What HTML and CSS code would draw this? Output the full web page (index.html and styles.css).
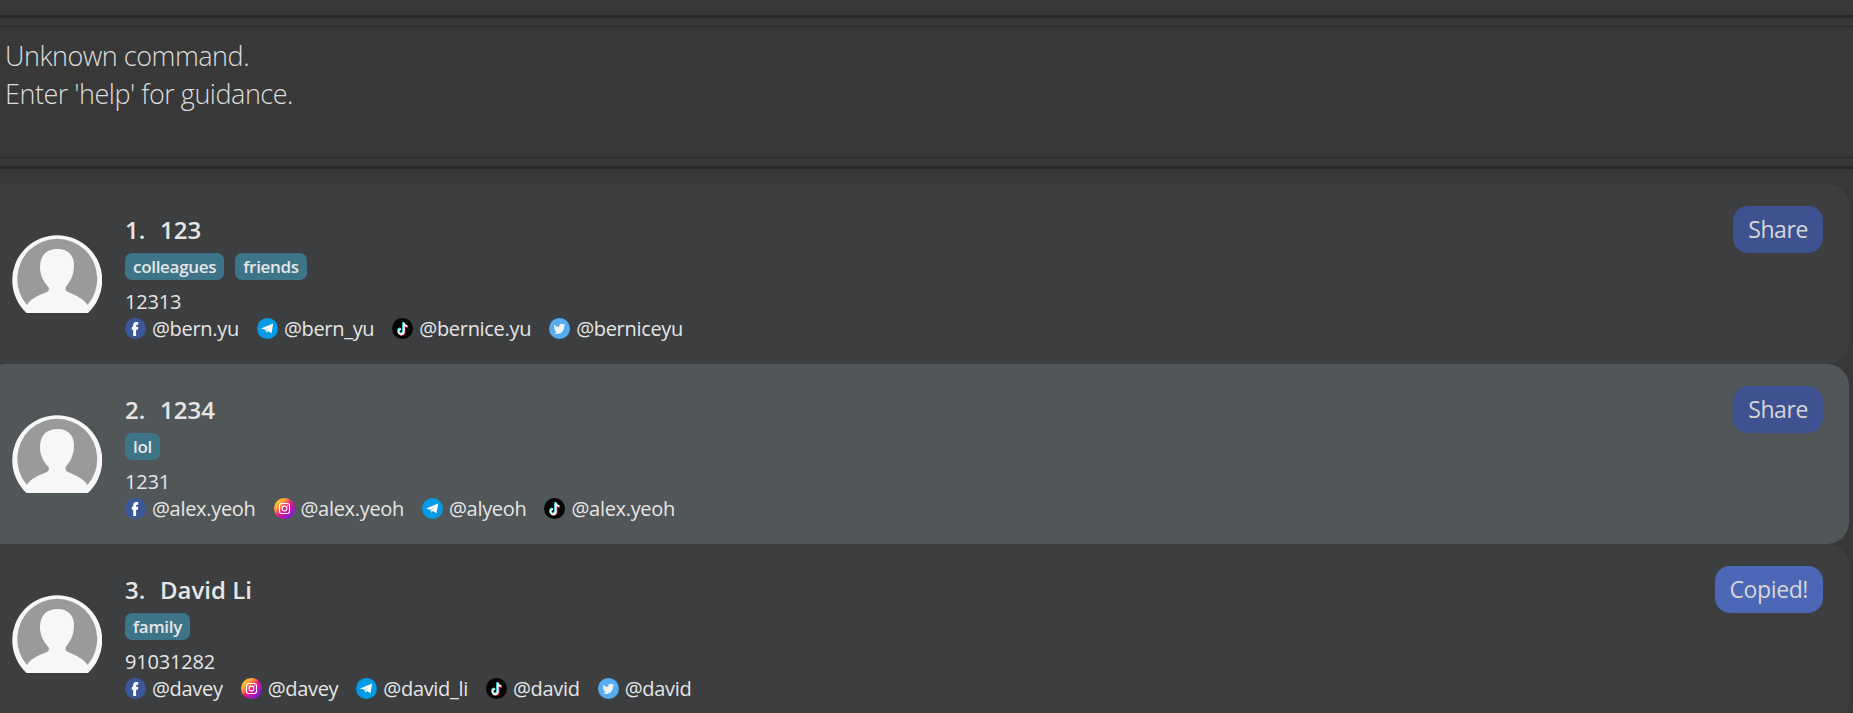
FILE: index.html
```
<!DOCTYPE html>
<html lang="en">
<head>
<meta charset="utf-8">
<title>Contacts</title>
<link rel="stylesheet" href="styles.css">
</head>
<body>
<svg class="defs" aria-hidden="true">
  <defs>
    <linearGradient id="ig" x1="0.1" y1="0.1" x2="0.9" y2="0.9">
      <stop offset="0" stop-color="#ffd91f"/>
      <stop offset="0.28" stop-color="#ff9440"/>
      <stop offset="0.5" stop-color="#f01883"/>
      <stop offset="0.78" stop-color="#a516c0"/>
      <stop offset="1" stop-color="#6a1fe0"/>
    </linearGradient>
    <symbol id="avatar" viewBox="0 0 90 78">
      <path d="M14.500 78A45 45 0 1 1 76 78Z" fill="#f7f7f7"/>
      <path d="M15 70A40 40 0 1 1 75.500 70C73 65 64 60 55 56.500C53 55 53.500 53 54 51.500C59 46 62 39 62 30C62 20 55.500 14 45.500 14C35 14 28 20 28 32C28 40 31 46 36.500 52C37.500 54 37 55.500 35 57C27 60 18 64 15 70Z" fill="#9a9a9a"/>
    </symbol>
    <symbol id="facebook" viewBox="0 0 21 21">
      <circle cx="10.500" cy="10.500" r="10.500" fill="#3b5998"/>
      <path d="M8.200 18V11.700H6.800V8.700H8.200V7C8.200 4.900 9.400 4 11.100 4H13.200V6.700H12C11.300 6.700 11.100 7 11.100 7.600V8.700H13.200L12.900 11.700H11.100V18Z" fill="#fff"/>
    </symbol>
    <symbol id="telegram" viewBox="0 0 21 21">
      <circle cx="10.500" cy="10.500" r="10.500" fill="#039be5"/>
      <path d="M4 10.600L16.200 5.600L14.500 15.200L11 13L9.300 14.800L8.500 11.800Z" fill="#fff"/>
      <path d="M8.700 11.600L13.500 8.200L9.700 12.300L9.400 14.200Z" fill="#8fd0f2"/>
    </symbol>
    <symbol id="tiktok" viewBox="0 0 21 21">
      <circle cx="10.500" cy="10.500" r="10.500" fill="#050505"/>
      <g fill="none" stroke-width="1.700">
        <path d="M11 4.200V13.200A2.500 2.500 0 1 1 8.200 10.300M11 4.500C11.300 6.500 12.400 7.500 14.400 7.600" stroke="#25f4ee"/>
        <path d="M12.600 5V14.200A2.700 2.700 0 0 1 7.700 15.800M12.600 5.300C12.900 7.500 13.900 8.700 16.100 8.800" stroke="#fe2c55"/>
        <path d="M11.800 4.600V13.700A2.600 2.600 0 1 1 9.200 11.200M11.800 5C12.100 7.100 13.300 8 15.300 8.200" stroke="#fff"/>
      </g>
    </symbol>
    <symbol id="twitter" viewBox="0 0 21 21">
      <circle cx="10.500" cy="10.500" r="10.500" fill="#55acee"/>
      <path d="M16.400 7.200L15 8.500C15.100 12.800 12.100 15.900 8.300 15.900C6.900 15.900 5.700 15.500 4.800 14.900C6 15 7.200 14.600 8 13.900C6.900 13.800 6.100 13.100 5.800 12.200H6.800C5.700 11.800 5 10.900 5 9.800L6 10C5 9.200 4.700 7.900 5.300 6.800C6.600 8.200 8.200 9 10.200 9.100C9.800 7.300 11.100 5.700 12.800 5.700C13.500 5.700 14.100 6 14.600 6.500L16.100 5.900L15.200 7.300Z" fill="#f1f2f2"/>
    </symbol>
    <symbol id="instagram" viewBox="0 0 21 21">
      <circle cx="10.500" cy="10.500" r="10.500" fill="url(#ig)"/>
      <g fill="none" stroke="#fff" stroke-width="1.100">
        <rect x="5.500" y="5.500" width="10" height="10" rx="2.200"/>
        <circle cx="10.500" cy="10.500" r="2.400"/>
      </g>
      <circle cx="13.400" cy="7.600" r="0.600" fill="#fff"/>
    </symbol>
  </defs>
</svg>
<section class="result">
  <div class="result-text">Unknown command.<br>Enter 'help' for guidance.</div>
</section>
<main class="list">
  <article class="card">
    <svg class="avatar"><use href="#avatar"/></svg>
    <div class="info">
      <h2 class="name"><span class="index">1.</span>123</h2>
      <div class="tags"><span class="tag">colleagues</span><span class="tag">friends</span></div>
      <div class="phone">12313</div>
      <div class="socials">
        <span class="social"><svg><use href="#facebook"/></svg>@bern.yu</span>
        <span class="social"><svg><use href="#telegram"/></svg>@bern_yu</span>
        <span class="social"><svg><use href="#tiktok"/></svg>@bernice.yu</span>
        <span class="social"><svg><use href="#twitter"/></svg>@berniceyu</span>
      </div>
    </div>
    <button class="share">Share</button>
  </article>
  <article class="card selected">
    <svg class="avatar"><use href="#avatar"/></svg>
    <div class="info">
      <h2 class="name"><span class="index">2.</span>1234</h2>
      <div class="tags"><span class="tag">lol</span></div>
      <div class="phone">1231</div>
      <div class="socials">
        <span class="social"><svg><use href="#facebook"/></svg>@alex.yeoh</span>
        <span class="social"><svg><use href="#instagram"/></svg>@alex.yeoh</span>
        <span class="social"><svg><use href="#telegram"/></svg>@alyeoh</span>
        <span class="social"><svg><use href="#tiktok"/></svg>@alex.yeoh</span>
      </div>
    </div>
    <button class="share">Share</button>
  </article>
  <article class="card">
    <svg class="avatar"><use href="#avatar"/></svg>
    <div class="info">
      <h2 class="name"><span class="index">3.</span>David Li</h2>
      <div class="tags"><span class="tag">family</span></div>
      <div class="phone">91031282</div>
      <div class="socials">
        <span class="social"><svg><use href="#facebook"/></svg>@davey</span>
        <span class="social"><svg><use href="#instagram"/></svg>@davey</span>
        <span class="social"><svg><use href="#telegram"/></svg>@david_li</span>
        <span class="social"><svg><use href="#tiktok"/></svg>@david</span>
        <span class="social"><svg><use href="#twitter"/></svg>@david</span>
      </div>
    </div>
    <button class="share copied">Copied!</button>
  </article>
</main>
</body>
</html>
```
FILE: styles.css
```
* { box-sizing: border-box; }
html { overflow: hidden; }
body {
  margin: 0;
  height: 713px;
  padding-top: 15px;
  overflow: hidden;
  background: #383838;
  color: #e6e6e6;
  font-family: "Open Sans", "Noto Sans", sans-serif;
}
.defs { position: absolute; width: 0; height: 0; }
.result {
  height: 154px;
  padding: 8px 0;
  border-top: 3px solid #2b2b2b;
  border-bottom: 3px solid #2b2b2b;
}
.result-text {
  height: 132px;
  padding: 10px 5px;
  border-top: 1px solid #2b2b2b;
  border-bottom: 1px solid #2b2b2b;
  font-size: 27px;
  font-weight: 300;
  line-height: 38px;
  letter-spacing: -0.48px;
  color: #dedede;
}
.list { margin: 15px 4px 0 -17px; }
.card {
  display: flex;
  align-items: flex-start;
  height: 180px;
  padding: 22px 26px 0 29px;
  border-radius: 22px;
  background: #3c3e3f;
}
.card.selected { background: #515658; }
.avatar { width: 90px; height: 78px; margin-top: 29px; }
.info { flex: 1; margin-left: 23px; padding-top: 8px; }
.name {
  display: flex;
  margin: 0;
  font-size: 24px;
  font-weight: 600;
  line-height: 32px;
}
.index { width: 35px; }
.tags { display: flex; gap: 11px; margin-top: 7px; }
.tag {
  height: 27px;
  padding: 0 8px;
  border-radius: 7px;
  background: #3e7488;
  font-size: 17px;
  font-weight: 600;
  line-height: 27px;
  letter-spacing: -0.3px;
}
.phone { margin-top: 8px; font-size: 20px; line-height: 28px; letter-spacing: -0.2px; }
.socials { display: flex; gap: 18px; height: 25px; }
.social {
  display: flex;
  align-items: center;
  font-size: 20px;
  line-height: 25px;
  letter-spacing: -0.31px;
}
.social svg { width: 21px; height: 21px; margin-right: 6px; }
.share {
  height: 47px;
  padding: 0 15px;
  border: 0;
  border-radius: 15px;
  background: #3e5291;
  color: #d6d6d6;
  font: 400 23px/47px "Open Sans", "Noto Sans", sans-serif;
  letter-spacing: -0.4px;
}
.share.copied { background: #4c67b5; }
```
